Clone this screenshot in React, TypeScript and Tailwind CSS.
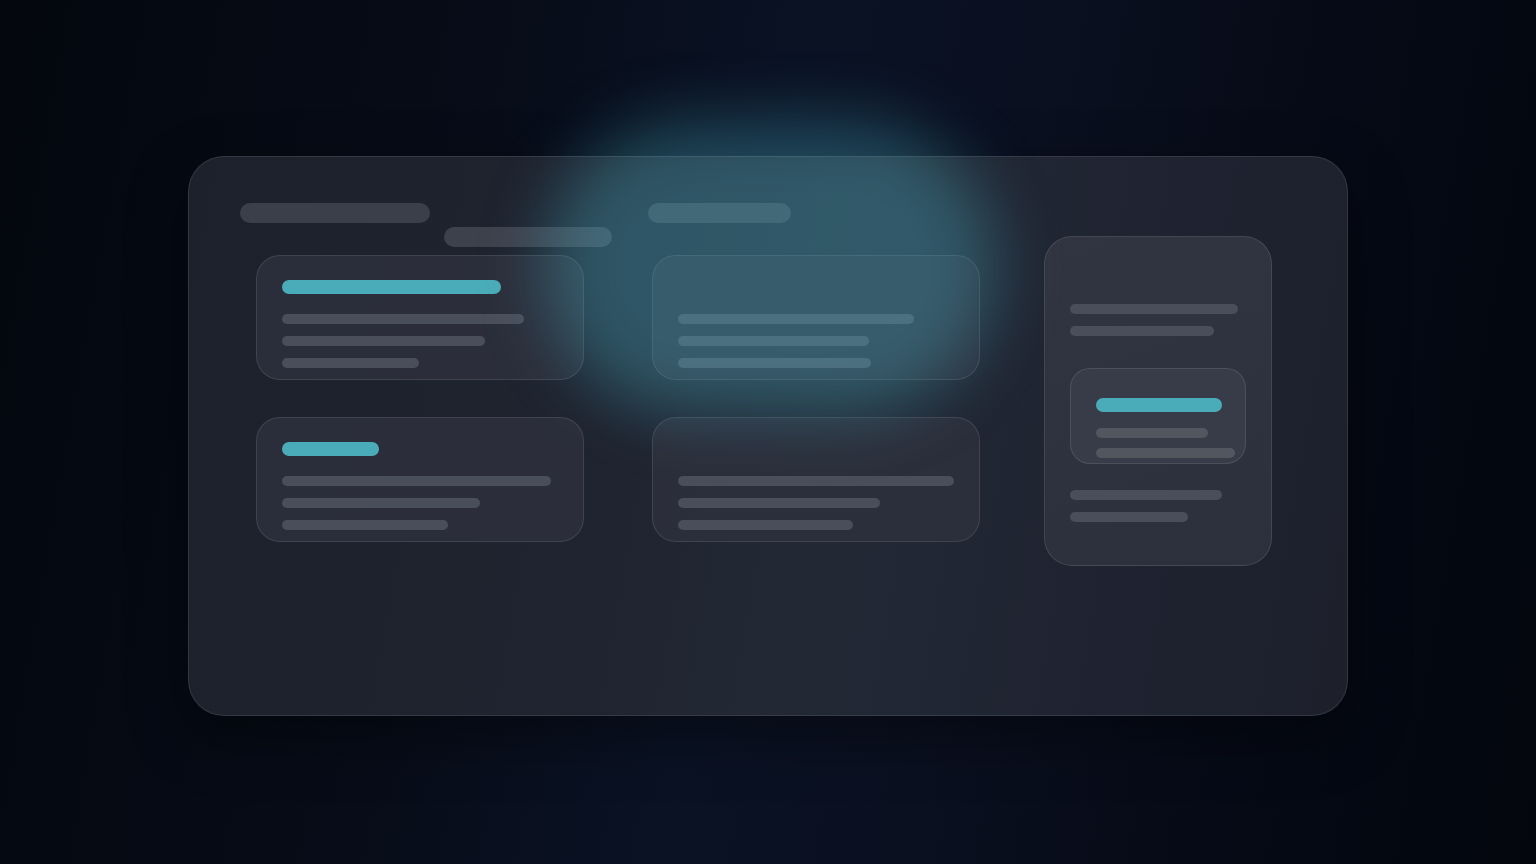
import React from "react";

function Line({ w, className = "" }: { w: string; className?: string }) {
  return <div className={`h-[10px] rounded-full bg-[#4a4e5a] ${w} ${className}`} />;
}

function Card({ accent, lines }: { accent?: string; lines: string[] }) {
  return (
    <div className="box-border h-[125px] w-[328px] rounded-[24px] border border-white/10 bg-[#2c303c]/90 pl-[25px] pt-[24px]">
      <div className={`h-[14px] rounded-full ${accent ? `bg-[#4aacb8] ${accent}` : "w-[200px] opacity-0"}`} />
      <div className="mt-[20px] flex flex-col gap-[12px]">
        {lines.map((l, i) => (
          <Line key={i} w={l} />
        ))}
      </div>
    </div>
  );
}

export default function App() {
  return (
    <div
      className="relative min-h-screen w-full overflow-hidden bg-[linear-gradient(100deg,#04070e_0%,#070c18_30%,#0a1224_48%,#0a1020_62%,#060a16_80%,#03060d_100%)] pt-[156px]"
      style={{ fontFamily: '"Inter", "Liberation Sans", sans-serif' }}
    >
      <div className="mx-auto box-border flex h-[560px] w-[1160px] rounded-[36px] border border-white/10 bg-[linear-gradient(100deg,#1d212b_0%,#1f2430_40%,#222935_55%,#1f2331_80%,#1d202b_100%)] pl-[51px] pt-[46px] shadow-[0_20px_60px_rgba(0,0,0,0.4)]">
        <div className="flex flex-col">
          <div className="flex items-start">
            <div className="h-[20px] w-[190px] rounded-full bg-[#3b3f4a]" />
            <div className="ml-[14px] mt-[24px] h-[20px] w-[168px] rounded-full bg-[#3d414c]" />
            <div className="ml-[36px] h-[20px] w-[143px] rounded-full bg-[#3d414c]" />
          </div>
          <div className="ml-[16px] mt-[8px] grid grid-cols-[328px_328px] gap-x-[68px] gap-y-[37px]">
            <Card accent="w-[219px]" lines={["w-[242px]", "w-[203px]", "w-[137px]"]} />
            <Card lines={["w-[236px]", "w-[191px]", "w-[193px]"]} />
            <Card accent="w-[97px]" lines={["w-[269px]", "w-[198px]", "w-[166px]"]} />
            <Card lines={["w-[276px]", "w-[202px]", "w-[175px]"]} />
          </div>
        </div>
        <div className="ml-[64px] mt-[33px] box-border h-[330px] w-[228px] rounded-[28px] border border-white/10 bg-[linear-gradient(160deg,#313541,#2c303c)] pl-[25px] pt-[67px]">
          <div className="flex flex-col gap-[12px]">
            <Line w="w-[168px]" />
            <Line w="w-[144px]" />
          </div>
          <div className="mt-[32px] box-border h-[96px] w-[176px] rounded-[20px] border border-white/10 bg-[#383c48] pl-[25px] pt-[29px]">
            <div className="h-[14px] w-[126px] rounded-full bg-[#4aacb8]" />
            <div className="mt-[16px] h-[10px] w-[112px] rounded-full bg-[#52565f]" />
            <div className="mt-[10px] h-[10px] w-[139px] rounded-full bg-[#52565f]" />
          </div>
          <div className="mt-[26px] flex flex-col gap-[12px]">
            <Line w="w-[152px]" />
            <Line w="w-[118px]" />
          </div>
        </div>
      </div>
      <div className="pointer-events-none absolute left-[545px] top-[122px] h-[290px] w-[450px] rounded-full bg-[#4cb4cc]/35 blur-[32px]" />
    </div>
  );
}
